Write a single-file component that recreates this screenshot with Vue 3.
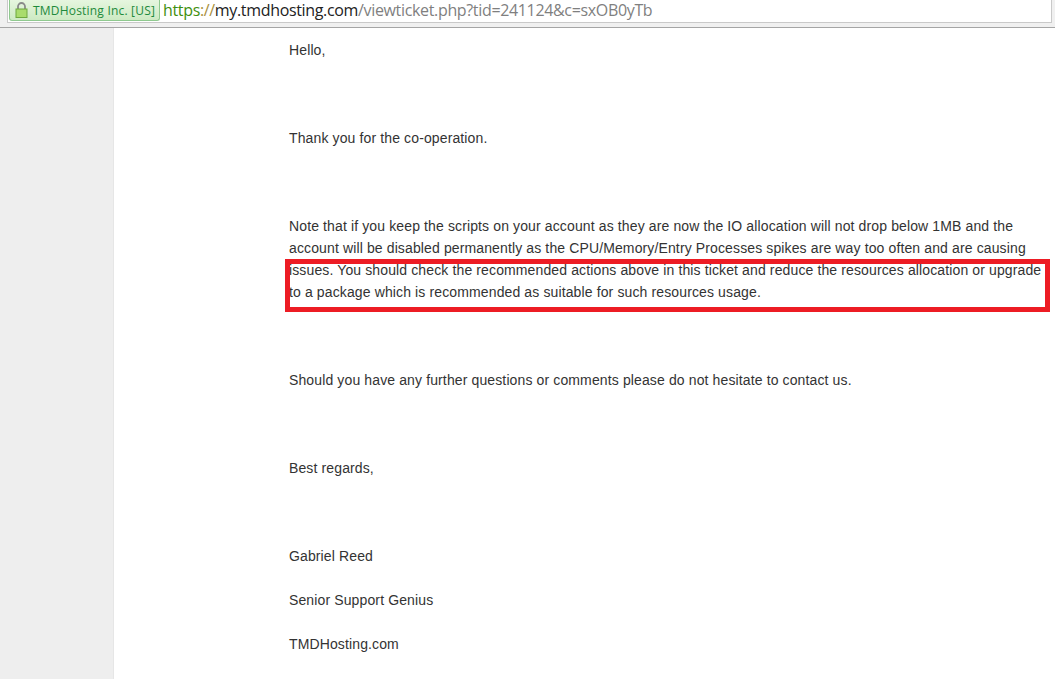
<script setup>
  // チケット本文の段落
  const paragraphs = [
    { lines: ['Hello,'] },
    { lines: ['Thank you for the co-operation.'] },
    {
      lines: [
        'Note that if you keep the scripts on your account as they are now the IO allocation will not drop below 1MB and the',
        'account will be disabled permanently as the CPU/Memory/Entry Processes spikes are way too often and are causing',
        'issues. You should check the recommended actions above in this ticket and reduce the resources allocation or upgrade',
        'to a package which is recommended as suitable for such resources usage.'
      ]
    },
    { lines: ['Should you have any further questions or comments please do not hesitate to contact us.'] },
    { lines: ['Best regards,'] }
  ]
  const signature = ['Gabriel Reed', 'Senior Support Genius', 'TMDHosting.com']
</script>

<template>
  <div class="page">
    <header class="addressbar">
      <div class="omnibox">
        <div class="ev-badge">
          <svg class="lock" width="13" height="16" viewBox="0 0 13 16">
            <path d="M3 8V4.5a3.5 3.5 0 0 1 7 0V8" fill="none" stroke="#8a8a8a" stroke-width="1.8" />
            <rect x="1" y="7" width="11" height="8.5" fill="#a9dc6c" stroke="#6fa83e" />
          </svg>
          <span>TMDHosting Inc. [US]</span>
        </div>
        <div class="url">
          <span class="scheme">https</span><span class="slashes">://</span><span class="host">my.tmdhosting.com</span><span class="path">/viewticket.php?tid=241124&amp;c=sxOB0yTb</span>
        </div>
      </div>
    </header>

    <div class="content">
      <aside class="gutter"></aside>
      <main class="ticket">
        <div class="message">
          <p v-for="(p, i) in paragraphs" :key="i" class="para">
            <span v-for="line in p.lines" :key="line" class="line">{{ line }}</span>
          </p>
          <div class="signature">
            <p v-for="s in signature" :key="s" class="sig-line">{{ s }}</p>
          </div>
        </div>
      </main>
      <!-- 赤枠の注釈 -->
      <div class="highlight"></div>
    </div>
  </div>
</template>

<style>
html, body {
  margin: 0;
  overflow: hidden;
}
</style>

<style scoped>
.page {
  width: 1055px;
  height: 679px;
  overflow: hidden;
  background: #fff;
  font-family: "Liberation Sans", Arial, sans-serif;
}

/* ===== アドレスバー ===== */
.addressbar {
  box-sizing: border-box;
  height: 28px;
  padding: 0 3px 4px 7px;
  background: #f0f0f0;
  border-bottom: 1px solid #a5a5a5;
}
.omnibox {
  box-sizing: border-box;
  height: 23px;
  display: flex;
  align-items: flex-start;
  padding-left: 1px;
  background: #fff;
  border: 1px solid #c9c9c9;
  border-top: 0;
}
.ev-badge {
  box-sizing: border-box;
  width: 151px;
  height: 21px;
  display: flex;
  align-items: center;
  gap: 5px;
  padding-left: 5px;
  background: linear-gradient(#e6f6df, #cdeac3);
  border: 1px solid #8fc98f;
  border-top: 0;
  border-radius: 0 0 3px 3px;
  font-family: "Open Sans", sans-serif;
  font-size: 12px;
  letter-spacing: 0.2px;
  color: #1e8a3c;
  white-space: nowrap;
}
.lock { flex-shrink: 0; }
.url {
  margin-left: 3px;
  font-family: "Open Sans", sans-serif;
  font-size: 16px;
  letter-spacing: -0.34px;
  line-height: 20px;
  white-space: nowrap;
}
.scheme { color: #3f8f0f; }
.slashes { color: #a98f3c; }
.host { color: #222; }
.path { color: #7f7f7f; }

/* ===== 本文 ===== */
.content {
  position: relative;
  display: flex;
  height: 651px;
}
.gutter {
  width: 113px;
  flex-shrink: 0;
  background: #eee;
  border-right: 1px solid #e6e6e6;
}
.ticket {
  flex: 1;
  padding: 11px 0 0 175px;
  color: #333;
  font-size: 14px;
  letter-spacing: 0.125px;
  line-height: 22px;
}
.message { white-space: nowrap; }
.para {
  margin: 0 0 66px;
}
.line { display: block; }
.sig-line { margin: 0 0 22px; }

.highlight {
  position: absolute;
  left: 285px;
  top: 231px;
  width: 765px;
  height: 53px;
  box-sizing: border-box;
  border: 5px solid #ed1c24;
}
</style>
